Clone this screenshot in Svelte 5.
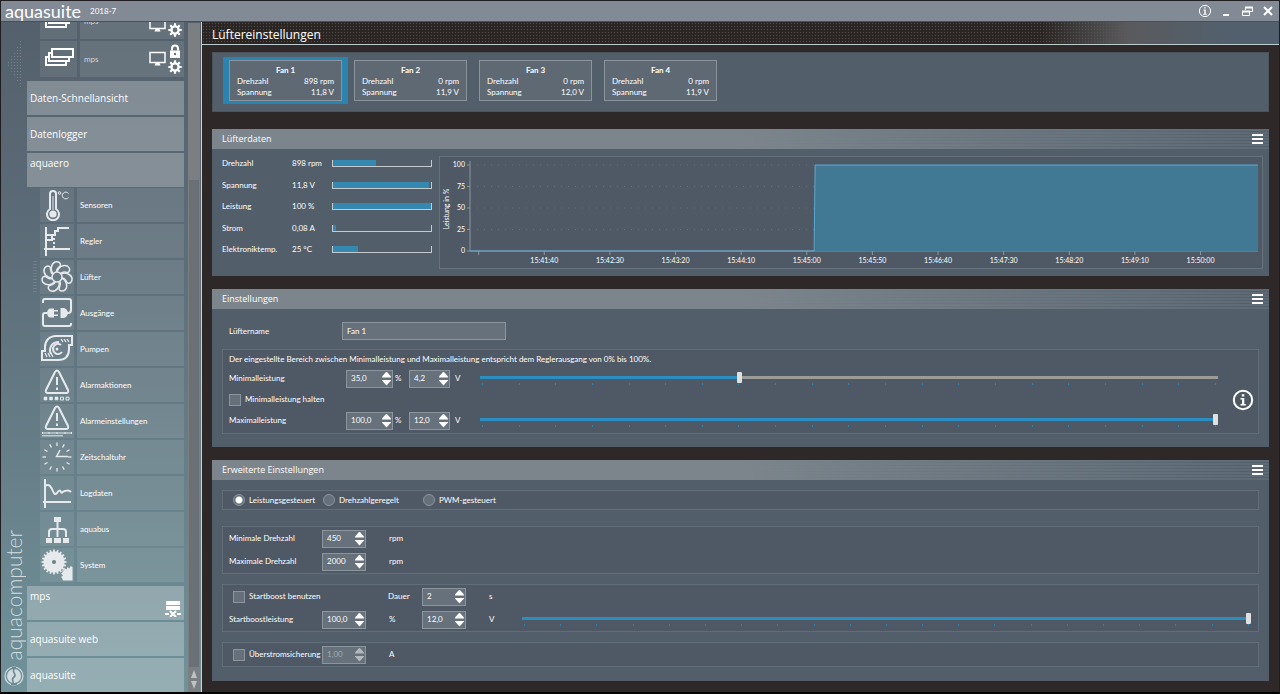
<script>
	let selectedFan = 0;
	let mode = 'power';
	let fanName = 'Fan 1';
	let minPower = 35;
	let maxPower = 100;
	let boostPower = 100;
	let chartWidth = 824;

	const fans = [
		{ name: 'Fan 1', speed: '898 rpm', voltage: '11,8 V' },
		{ name: 'Fan 2', speed: '0 rpm', voltage: '11,9 V' },
		{ name: 'Fan 3', speed: '0 rpm', voltage: '12,0 V' },
		{ name: 'Fan 4', speed: '0 rpm', voltage: '11,9 V' }
	];

	const readings = [
		{ label: 'Drehzahl', value: '898 rpm', level: 44 },
		{ label: 'Spannung', value: '11,8 V', level: 98 },
		{ label: 'Leistung', value: '100 %', level: 100 },
		{ label: 'Strom', value: '0,08 A', level: 3 },
		{ label: 'Elektroniktemp.', value: '25 °C', level: 25 }
	];

	const pages = [
		{ name: 'Sensoren', icon: 'sensor' },
		{ name: 'Regler', icon: 'control' },
		{ name: 'Lüfter', icon: 'fan' },
		{ name: 'Ausgänge', icon: 'output' },
		{ name: 'Pumpen', icon: 'pump' },
		{ name: 'Alarmaktionen', icon: 'alarm' },
		{ name: 'Alarmeinstellungen', icon: 'alarmset' },
		{ name: 'Zeitschaltuhr', icon: 'clock' },
		{ name: 'Logdaten', icon: 'log' },
		{ name: 'aquabus', icon: 'bus' },
		{ name: 'System', icon: 'system' }
	];

	const modes = [
		{ id: 'power', label: 'Leistungsgesteuert' },
		{ id: 'speed', label: 'Drehzahlgeregelt' },
		{ id: 'pwm', label: 'PWM-gesteuert' }
	];

	const times = ['', '15:41:40', '15:42:30', '15:43:20', '15:44:10', '15:45:00', '15:45:50', '15:46:40', '15:47:30', '15:48:20', '15:49:10', '15:50:00'];
	const scale = [100, 75, 50, 25, 0];
	const ticks = Array(21);

	const plotLeft = 30;
	const plotTop = 8;
	const plotBottom = 94;
	$: plotRight = chartWidth - 4;
	$: plotWidth = plotRight - plotLeft;
	$: jump = plotLeft + plotWidth * 0.438;

	const yOf = (value) => plotBottom - ((plotBottom - plotTop) * value) / 100;

	// outline of a gear, used by the settings and system icons
	const gear = (cx, cy, outer, inner, teeth) => {
		const points = [];
		for (let i = 0; i < teeth; i++) {
			[[-0.3, inner], [-0.2, outer], [0.2, outer], [0.3, inner]].forEach(([shift, radius]) => {
				const angle = ((i + shift) / teeth) * Math.PI * 2;
				points.push(`${(cx + Math.cos(angle) * radius).toFixed(2)},${(cy + Math.sin(angle) * radius).toFixed(2)}`);
			});
		}
		return points.join(' ');
	};
</script>

{#snippet spinner(id, value, label, disabled = false)}
	<span class="spinner" class:disabled>
		<input {id} type="text" {value} aria-label={label} {disabled} />
		<span class="arrows">
			<button class="up" aria-label="+" {disabled}></button>
			<button class="down" aria-label="-" {disabled}></button>
		</span>
	</span>
{/snippet}

{#snippet tickmarks()}
	<span class="ticks">
		{#each ticks as _}<i></i>{/each}
	</span>
{/snippet}

{#snippet stack()}
	<svg class="stack" viewBox="0 0 32 24">
		<path d="M9 2h21v8H9zM9 6H6v8h20v-3M6 10H3v8h20v-3" />
	</svg>
{/snippet}

{#snippet cog()}
	<svg class="cog" viewBox="0 0 14 14">
		<polygon points={gear(7, 7, 6.8, 4.8, 8)} />
		<circle cx="7" cy="7" r="2.4" />
	</svg>
{/snippet}

{#snippet monitor()}
	<svg class="monitor" viewBox="0 0 18 16">
		<rect x="1" y="1.5" width="15" height="10" />
		<path d="M6.5 12h4l1 2.5h-6z" />
	</svg>
{/snippet}

<div class="window">
	<header class="titlebar">
		<span class="logo">aquasuite</span>
		<span class="version">2018-7</span>
		<div class="controls">
			<button aria-label="Info">
				<svg viewBox="0 0 14 14"><circle cx="7" cy="7" r="5.6" /><path class="solid" d="M5.500 5.500h2.200v4.200h1v1H5.300v-1h1V6.400h-.8zM6.200 3.200h1.500v1.400H6.200z" /></svg>
			</button>
			<button aria-label="Minimieren">
				<svg viewBox="0 0 14 14"><path stroke-width="2" d="M4 11h6" /></svg>
			</button>
			<button aria-label="Wiederherstellen">
				<svg viewBox="0 0 14 14"><path d="M5.500 6V3.500h7v4H10" /><path stroke-width="2" d="M5 3.500h8M2 7.500h8" /><path d="M2.500 7v4.500h7V7" /></svg>
			</button>
			<button aria-label="Schließen">
				<svg viewBox="0 0 14 14"><path stroke-width="2" d="M3 3l8 8M11 3l-8 8" /></svg>
			</button>
		</div>
	</header>

	<div class="body">
		<aside>
			<div class="rail">
				<button class="collapse" aria-label="Einklappen"></button>
				<div class="brand">
					<span>aquacomputer</span>
					<svg viewBox="0 0 20 20">
						<circle cx="10" cy="10" r="9" fill="none" stroke="#d3dde0" stroke-width="1.2" />
						<circle cx="10" cy="10" r="7" fill="#d3dde0" />
						<path d="M11 2c-5 4 3 6-1 9s1 5-1 8" fill="none" stroke="#6c8a91" stroke-width="1.6" />
						<path d="M8 1h4v2H8zM7 17h6v2H7z" fill="#6c8a91" />
					</svg>
				</div>
			</div>

			<nav>
				<a class="device" href="#mps1">
					<span class="icon">{@render stack()}</span>
					<span class="name">mps <span class="badges">{@render monitor()}{@render cog()}</span></span>
				</a>
				<a class="device" href="#mps2">
					<span class="icon">{@render stack()}</span>
					<span class="name">mps
						<span class="badges">
							{@render monitor()}
							<span class="pair">
								<svg class="lock" viewBox="0 0 12 14"><path d="M3 6V4a3 3 0 0 1 6 0v2" /><rect x="1" y="6" width="10" height="7.500" /><circle cx="6" cy="9.500" r="1.200" /></svg>
								{@render cog()}
							</span>
						</span>
					</span>
				</a>
				<a class="tile" href="#overview">Daten-Schnellansicht</a>
				<a class="tile" href="#logger">Datenlogger</a>
				<a class="tile top" href="#aquaero">aquaero</a>
				<div class="submenu">
					{#each pages as page}
						<a class="page" class:active={page.icon == 'fan'} href="#{page.icon}">
							<span class="icon">
								<svg viewBox="0 0 32 32">
									{#if page.icon == 'sensor'}
										<path d="M9 20V5a3 3 0 0 1 6 0v15a6 6 0 1 1-6 0z" />
										<path stroke-width="1" d="M12 7v14" />
										<circle class="fill" cx="12" cy="25" r="2.600" />
										<circle stroke-width="1" cx="18.500" cy="4" r="1.300" />
										<path stroke-width="1" d="M27.500 4.500a3.400 3.400 0 1 0 0 4" />
									{:else if page.icon == 'control'}
										<path d="M5 2v29M3 24h26M5 10h6v5H5M11 10h3V6h3V3h11" />
										<path stroke-dasharray="2 2" d="M13 13v11" />
									{:else if page.icon == 'fan'}
										<g stroke-width="1.500">
											<circle cx="16" cy="16" r="5" />
											{#each [0, 51, 103, 154, 206, 257, 309] as angle}
												<path transform="rotate({angle} 16 16)" d="M12 12.500C9 9 10 3 14 1c3-.8 5.500.5 5.500 3-.3 2-4.500 3-4 7" />
											{/each}
										</g>
									{:else if page.icon == 'output'}
										<path d="M2 6V4Q2 2 4 2h24q2 0 2 2v9q0 3-3 3h-1M6 16H4q-2 0-2 2v9q0 2 2 2h24q2 0 2-2v-1" />
										<path class="fill" stroke="none" d="M13 11.500v1.500h4v1.500h-4v3h4V19h-4v1.500H9.500q-3 0-3.500-4.500.5-4.500 3.500-4.500zM19.500 11h3.500q3.500 1 4 5-.5 4-4 5h-3.500z" />
									{:else if page.icon == 'pump'}
										<path d="M31 3H15C8 3 4 8 4 14v4H1v9h16c8 0 11-5 11-11v-4h3zM10 21C7 15 11 9 18 9" />
										<path d="M20 12a5 5 0 1 0 1 7" />
										<circle class="fill" cx="16" cy="16" r="1.500" stroke="none" />
										<path stroke-width="1.300" d="M20 6l2 3M23 6l2 3M26 6l2 3M4 20l2 4M7 20l2 4M10 20l2 4" />
									{:else if page.icon == 'alarm' || page.icon == 'alarmset'}
										<path d="M14 3q2-3 4 0l9 18q1 3-2 3H7q-3 0-2-3z" />
										<path d="M16 8v8M16 18.500v2.500" />
										{#if page.icon == 'alarm'}
											<path class="fill" d="M3 28h3v3H3zM8.500 28h3v3h-3zM14 28h3v3h-3z" stroke-width=".5" />
											<path stroke-width="1" d="M19.500 28.200h3v2.800h-3zM25 28.200h3v2.800h-3z" />
										{:else}
											<path stroke-width="1" d="M1 28h30M1.500 27v2M8 27v2M16 27v2M24 27v2M30.500 27v2M1 30.800h21" />
										{/if}
									{:else if page.icon == 'clock'}
										{#each Array(12) as _, hour}
											<path stroke-width="1.300" transform="rotate({hour * 30} 16 16)" d="M16 1.500v3.500" />
										{/each}
										<path stroke-width="1.500" d="M19 9l-3.500 6.500H27" />
									{:else if page.icon == 'log'}
										<path d="M4 2v29M2 25h28M4 9c3-2 5-1 7 3 2 5 3 6 5 4 2-3 3-3 4-1s2-1 4-1 3-2 6 1" />
									{:else if page.icon == 'bus'}
										<path class="fill" stroke="none" d="M13 4h7v5h-7zM5 25h6v5H5zM13 25h7v5h-7zM22 25h6v5h-6z" />
										<path d="M16.500 9v15M8 24v-5q0-3 3-3h11q3 0 3 3v5" />
									{:else}
										<polygon class="fill" points={gear(13, 13, 12.5, 10.5, 20)} stroke="none" />
										<circle class="hole" cx="13" cy="13" r="2" />
										<path class="fill" stroke="none" d="M31.500 31.500H22l-1-2.500-1-1 2-1.500-2-2 2-1.500-1-2 2 .5.5-2.500 2 1.500 1-2.500 2 1.500 1-2.500 2 1z" />
									{/if}
								</svg>
							</span>
							<span class="name">{page.name}</span>
						</a>
					{/each}
				</div>
				<a class="tile top" href="#mps">mps
					<svg class="server" viewBox="0 0 16 16"><path d="M1 0h14v4H1zM1 5h14v4H1zM0 12h4v2H0zM12 12h4v2h-4z" /><path class="cross" d="M5 10l6 6M11 10l-6 6" /></svg>
				</a>
				<a class="tile" href="#web">aquasuite web</a>
				<a class="tile" href="#aquasuite">aquasuite</a>
			</nav>

			<div class="scrollbar">
				<div class="thumb"></div>
				<button class="up" aria-label="Nach oben"></button>
				<button class="down" aria-label="Nach unten"></button>
			</div>
		</aside>

		<main>
			<h1>Lüftereinstellungen</h1>

			<div class="content">
				<section class="fans">
					{#each fans as fan, index}
						<button class:selected={selectedFan == index} on:click={() => (selectedFan = index)}>
							<span class="card">
								<b>{fan.name}</b>
								<span>Drehzahl <em>{fan.speed}</em></span>
								<span>Spannung <em>{fan.voltage}</em></span>
							</span>
						</button>
					{/each}
				</section>

				<section class="panel">
					<header><h2>Lüfterdaten</h2><button class="menu" aria-label="Menü"></button></header>
					<div class="data">
						<dl>
							{#each readings as reading}
								<div>
									<dt>{reading.label}</dt>
									<dd>{reading.value}</dd>
									<dd class="meter"><span style="width: {reading.level}%"></span></dd>
								</div>
							{/each}
						</dl>
						<div class="chart" bind:clientWidth={chartWidth}>
							<svg width={chartWidth} height="111">
								{#each scale as value}
									{#if value > 0}
										<line class="grid" x1={plotLeft + 7} x2={jump} y1={yOf(value)} y2={yOf(value)} />
									{/if}
									<line class="axis" x1={plotLeft - 3} x2={plotLeft} y1={yOf(value)} y2={yOf(value)} />
									<text class="value" x={plotLeft - 5} y={yOf(value) + 2}>{value}</text>
								{/each}
								<text class="title" transform="translate(9 52) rotate(-90)">Leistung in %</text>
								<path class="axis" d="M{plotLeft} 4V{plotBottom}H{plotRight}" />
								{#each times as time, index}
									{@const x = plotLeft + plotWidth * (0.011 + index * 0.08328)}
									<line class="axis" x1={x} x2={x} y1={plotBottom} y2={plotBottom + 4} />
									<text class="time" {x} y={plotBottom + 12}>{time}</text>
								{/each}
								<rect class="area" x={jump} y={plotTop} width={plotRight - jump} height={plotBottom - plotTop} />
								<path class="curve" d="M{plotLeft} {plotBottom}H{jump - 1}L{jump} {plotTop}H{plotRight}" />
							</svg>
						</div>
					</div>
				</section>

				<section class="panel">
					<header><h2>Einstellungen</h2><button class="menu" aria-label="Menü"></button></header>
					<div class="settings">
						<div class="fanname">
							<label for="fanname">Lüftername</label>
							<input id="fanname" type="text" bind:value={fanName} />
						</div>
						<div class="group range">
							<div class="rows">
								<p>Der eingestellte Bereich zwischen Minimalleistung und Maximalleistung entspricht dem Reglerausgang von 0% bis 100%.</p>
								<div class="power">
									<label for="minpower">Minimalleistung</label>
									{@render spinner('minpower', '35,0', 'Minimalleistung %')}
									<span>%</span>
									{@render spinner('minvolt', '4,2', 'Minimalleistung V')}
									<span>V</span>
									<div class="slider">
										<input type="range" aria-label="Minimalleistung" bind:value={minPower} style="--level: {minPower}%" />
										{@render tickmarks()}
									</div>
								</div>
								<label class="check"><input type="checkbox" />Minimalleistung halten</label>
								<div class="power">
									<label for="maxpower">Maximalleistung</label>
									{@render spinner('maxpower', '100,0', 'Maximalleistung %')}
									<span>%</span>
									{@render spinner('maxvolt', '12,0', 'Maximalleistung V')}
									<span>V</span>
									<div class="slider">
										<input type="range" aria-label="Maximalleistung" bind:value={maxPower} style="--level: {maxPower}%" />
										{@render tickmarks()}
									</div>
								</div>
							</div>
							<button class="info" aria-label="Info">
								<svg viewBox="0 0 22 22"><circle cx="11" cy="11" r="9.200" /><path class="solid" d="M8.500 9h3.800v6h1.500v1.500H8.500V15H10v-4.500H8.500zM9.800 5.200h2.500v2.300H9.800z" /></svg>
							</button>
						</div>
					</div>
				</section>

				<section class="panel">
					<header><h2>Erweiterte Einstellungen</h2><button class="menu" aria-label="Menü"></button></header>
					<div class="advanced">
						<div class="group modes">
							{#each modes as item}
								<label class="check"><input type="radio" name="mode" value={item.id} bind:group={mode} />{item.label}</label>
							{/each}
						</div>
						<div class="group">
							<div class="line">
								<label for="minspeed">Minimale Drehzahl</label>
								{@render spinner('minspeed', '450', 'Minimale Drehzahl')}
								<span class="unit">rpm</span>
							</div>
							<div class="line">
								<label for="maxspeed">Maximale Drehzahl</label>
								{@render spinner('maxspeed', '2000', 'Maximale Drehzahl')}
								<span class="unit">rpm</span>
							</div>
						</div>
						<div class="group">
							<div class="line">
								<label class="check wide"><input type="checkbox" />Startboost benutzen</label>
								<label for="duration">Dauer</label>
								{@render spinner('duration', '2', 'Dauer')}
								<span class="unit">s</span>
							</div>
							<div class="line">
								<label for="boost">Startboostleistung</label>
								{@render spinner('boost', '100,0', 'Startboostleistung %')}
								<span class="unit">%</span>
								{@render spinner('boostvolt', '12,0', 'Startboostleistung V')}
								<span class="unit">V</span>
								<div class="slider">
									<input type="range" aria-label="Startboostleistung" bind:value={boostPower} style="--level: {boostPower}%" />
									{@render tickmarks()}
								</div>
							</div>
						</div>
						<div class="group">
							<div class="line">
								<label class="check"><input type="checkbox" />Überstromsicherung</label>
								{@render spinner('current', '1,00', 'Überstromsicherung', true)}
								<span class="unit">A</span>
							</div>
						</div>
					</div>
				</section>
			</div>
		</main>
	</div>
</div>

<style>
	:global(body) {
		margin: 0;
		background-color: #000;
	}

	.window,
	.window * {
		box-sizing: border-box;
	}

	.window {
		display: flex;
		flex-direction: column;
		height: 100vh;
		overflow: hidden;
		border: 1px solid #201d20;
		border-bottom: 2px solid #000;
		font-family: Lato, "Open Sans", sans-serif;
		font-size: 8px;
		line-height: 11px;
		color: #fff;
		background-color: #2f2828;
	}

	button {
		padding: 0;
		border: 0;
		background: none;
		color: inherit;
		font: inherit;
	}

	input {
		margin: 0;
		font: inherit;
		color: inherit;
	}

	a {
		color: inherit;
		text-decoration: none;
	}

	svg {
		display: block;
		fill: none;
		stroke: #fff;
	}

	.solid {
		fill: #fff;
		stroke: none;
	}

	/* title bar */
	.titlebar {
		display: flex;
		align-items: center;
		flex: none;
		height: 20px;
		padding: 0 4px;
		background-color: #828b95;
	}

	.logo {
		font-size: 18px;
		line-height: 20px;
	}

	.version {
		margin-left: 9px;
	}

	.controls {
		display: flex;
		gap: 7px;
		margin-left: auto;
	}

	.controls svg {
		width: 14px;
		height: 14px;
	}

	.body {
		display: flex;
		flex: 1;
		min-height: 0;
		border-top: 1px solid #4a5058;
	}

	/* sidebar */
	aside {
		display: flex;
		flex: none;
		width: 201px;
		overflow: hidden;
		border-right: 1px solid #c5d5d8;
		background: linear-gradient(#54616c, #5b6b77 30%, #68818a 70%, #70929a);
	}

	.rail {
		display: flex;
		flex-direction: column;
		justify-content: space-between;
		align-items: center;
		flex: none;
		width: 26px;
		padding: 18px 0 6px;
	}

	.collapse {
		width: 14px;
		height: 48px;
		clip-path: polygon(0 50%, 100% 0, 100% 100%);
		background: radial-gradient(#74838d 30%, transparent 40%) 0 0 / 3px 3px;
	}

	.brand {
		display: flex;
		flex-direction: column;
		align-items: center;
		gap: 6px;
	}

	.brand span {
		font-size: 21px;
		font-weight: 300;
		line-height: 24px;
		color: #d3dde0;
		writing-mode: vertical-rl;
		transform: rotate(180deg);
	}

	.brand svg {
		width: 20px;
		height: 20px;
		stroke: none;
	}

	nav {
		display: flex;
		flex-direction: column;
		gap: 2px;
		flex: 1;
		margin-top: -19px;
	}

	.device,
	.page {
		display: flex;
		flex: none;
		gap: 3px;
		height: 36px;
		margin-left: 13px;
	}

	.page {
		height: 34px;
		position: relative;
	}

	.page.active::before {
		content: "";
		position: absolute;
		left: -7px;
		width: 4px;
		height: 34px;
		background: radial-gradient(#84949c 30%, transparent 40%) 0 0 / 2px 3px;
	}

	.device .icon,
	.page .icon {
		display: flex;
		align-items: center;
		justify-content: center;
		width: 37px;
		background-color: rgba(255, 255, 255, 0.08);
	}

	.page .icon {
		width: 34px;
	}

	.device .name,
	.page .name {
		display: flex;
		align-items: center;
		flex: 1;
		padding-left: 4px;
		background-color: rgba(255, 255, 255, 0.1);
	}

	.page .name {
		padding: 1px 0 0 3px;
	}

	.device .name {
		color: #d2d7da;
	}

	.page svg {
		width: 32px;
		height: 32px;
		stroke: #e6eaed;
		stroke-width: 2;
	}

	.page .fill {
		fill: #e6eaed;
	}

	.page .hole {
		fill: #6c8088;
		stroke: none;
	}

	.stack {
		width: 32px;
		height: 24px;
		stroke-width: 2;
	}

	.badges {
		display: flex;
		align-items: center;
		gap: 1px;
		margin-left: auto;
		padding-right: 2px;
	}

	.device:first-child .badges {
		align-items: flex-end;
		padding-top: 12px;
	}

	.device:first-child .monitor {
		margin-bottom: 4px;
	}

	.pair {
		display: flex;
		flex-direction: column;
		align-items: center;
		gap: 1px;
	}

	.monitor {
		width: 18px;
		height: 16px;
		stroke-width: 1.5;
	}

	.monitor path,
	.lock rect {
		fill: #fff;
		stroke: none;
	}

	.lock {
		width: 12px;
		height: 15px;
		stroke-width: 2;
	}

	.lock circle,
	.cog circle {
		fill: #65717c;
		stroke: none;
	}

	.cog {
		width: 14px;
		height: 14px;
		fill: #fff;
		stroke: none;
	}

	.tile {
		display: flex;
		align-items: center;
		flex: none;
		height: 34px;
		padding: 0 3px;
		font-family: "Open Sans", sans-serif;
		font-size: 10px;
		line-height: 20px;
		background-color: rgba(255, 255, 255, 0.26);
	}

	.device + .tile {
		margin-top: 2px;
	}

	.tile.top {
		align-items: flex-start;
	}

	.server {
		align-self: flex-end;
		width: 16px;
		height: 16px;
		margin: 0 0 3px auto;
		fill: #fff;
		stroke: none;
	}

	.server .cross {
		stroke: #fff;
		stroke-width: 2;
	}

	.submenu {
		display: flex;
		flex-direction: column;
		gap: 2px;
		margin: -1px 0 2px;
	}

	.scrollbar {
		display: flex;
		flex-direction: column;
		align-items: center;
		flex: none;
		width: 12px;
		margin: 1px 1px 0 4px;
		padding-bottom: 3px;
		gap: 3px;
		background-color: #7b7f82;
	}

	.scrollbar .thumb {
		flex: 1;
		width: 10px;
		margin-top: 157px;
		background-color: #6b7075;
	}

	.scrollbar .up,
	.scrollbar .down {
		width: 6px;
		height: 8px;
		background-color: #bcc2c5;
		clip-path: polygon(50% 0, 100% 100%, 0 100%);
	}

	.scrollbar .down {
		clip-path: polygon(0 0, 100% 0, 50% 100%);
	}

	/* main area */
	main {
		flex: 1;
		min-width: 0;
		overflow: hidden;
	}

	h1,
	h2 {
		margin: 0;
		font-family: "Open Sans", sans-serif;
		font-weight: normal;
	}

	h1 {
		height: 23px;
		padding-left: 10px;
		border-bottom: 1px solid #bccccf;
		font-size: 12px;
		line-height: 25px;
		background:
			linear-gradient(to right, transparent 78%, #5a5a5d 86%, #52606d 95%),
			radial-gradient(#4f4946 25%, transparent 50%) 0 0 / 3px 3px,
			#292422;
	}

	.content {
		display: flex;
		flex-direction: column;
		gap: 13px;
		padding: 7px 10px;
	}

	.fans {
		display: flex;
		margin-bottom: 4px;
		padding: 4px 10px 7px;
		border: 1px solid #4b535b;
		background-color: #525e6a;
	}

	.fans button {
		width: 125px;
		padding: 3px 6px;
	}

	.fans .selected {
		background-color: #2a84af;
	}

	.card {
		display: flex;
		flex-direction: column;
		height: 41px;
		padding: 4px 7px;
		border: 1px solid #8b949c;
		background-color: #5e6974;
	}

	.card b {
		text-align: center;
	}

	.card span {
		display: flex;
		justify-content: space-between;
	}

	.card em {
		font-style: normal;
	}

	.panel {
		background-color: #525e6a;
	}

	.panel header {
		display: flex;
		align-items: center;
		justify-content: space-between;
		height: 20px;
		padding: 0 6px 0 10px;
		background:
			linear-gradient(to right, #7c858c 50%, transparent),
			repeating-linear-gradient(#5d6a76 0 2px, #525f6b 2px 3px);
	}

	h2 {
		font-size: 9px;
		line-height: 20px;
	}

	.menu {
		width: 11px;
		height: 10px;
		background: repeating-linear-gradient(#fff 0 2px, transparent 2px 4px);
	}

	.data {
		display: flex;
		gap: 7px;
		padding: 7px 6px 7px 10px;
	}

	dl {
		display: flex;
		flex-direction: column;
		flex: none;
		justify-content: space-between;
		margin: 0;
		padding: 2px 0 14px;
	}

	dl div {
		display: grid;
		grid-template-columns: 70px 40px 100px;
		align-items: center;
		height: 11px;
	}

	dd {
		margin: 0;
	}

	.meter {
		display: flex;
		height: 7px;
		border: 1px solid #c4cacd;
		border-top: 0;
	}

	.meter span {
		background-color: #3588af;
	}

	.chart {
		flex: 1;
		min-width: 0;
		height: 113px;
		border: 1px solid #66727e;
		background-color: #4f5965;
	}

	.chart text {
		fill: #fff;
		stroke: none;
		font-size: 7px;
	}

	.chart .value {
		text-anchor: end;
	}

	.chart .time,
	.chart .title {
		text-anchor: middle;
	}

	.chart .axis {
		stroke: #8c969f;
	}

	.chart .grid {
		stroke: #66717c;
		stroke-dasharray: 1 6;
	}

	.chart .area {
		fill: #417995;
		stroke: none;
	}

	.chart .curve {
		stroke: #5badd8;
	}

	.group {
		border: 1px solid #616e7a;
		background-color: #4f5965;
	}

	.settings {
		padding: 13px 10px;
	}

	.fanname {
		display: flex;
		align-items: center;
		height: 18px;
		margin-bottom: 9px;
		padding-left: 7px;
	}

	.fanname label {
		width: 113px;
	}

	.fanname input {
		width: 164px;
		height: 18px;
		padding: 0 4px;
		border: 1px solid #8b959d;
		background-color: #66717b;
	}

	.range {
		display: flex;
		align-items: center;
		padding: 0 4px 0 6px;
	}

	.rows {
		flex: 1;
		padding: 4px 0 2px;
	}

	.rows p {
		height: 14px;
		margin: 0;
	}

	.power {
		display: grid;
		grid-template-columns: 117px 47px 16px 41px 30px 1fr;
		align-items: center;
		height: 21px;
	}

	.power > span {
		padding-left: 2px;
	}

	.power > .spinner {
		width: 100%;
		padding-left: 4px;
	}

	.power > .spinner + span + .spinner + span {
		padding-left: 5px;
	}

	.rows .check {
		height: 21px;
	}

	.check {
		display: flex;
		align-items: center;
		gap: 4px;
	}

	.check input {
		appearance: none;
		flex: none;
		width: 12px;
		height: 12px;
		border: 1px solid #8b959d;
		background-color: #65707b;
	}

	.check input[type="checkbox"]:checked {
		background-color: #2a8ec2;
	}

	.check input[type="radio"] {
		border-radius: 50%;
	}

	.check input[type="radio"]:checked {
		background: radial-gradient(#fff 0 3px, #65707b 4px);
	}

	.spinner {
		display: flex;
		justify-content: space-between;
		width: 44px;
		height: 18px;
		padding: 0 1px 0 4px;
		border: 1px solid #8b959d;
		background-color: #66717b;
	}

	.spinner input {
		flex: 1;
		width: 0;
		padding: 0;
		border: 0;
		background: none;
	}

	.arrows {
		display: flex;
		flex-direction: column;
		justify-content: center;
		gap: 2px;
		width: 9px;
	}

	.arrows button {
		height: 6px;
		background-color: #fff;
		clip-path: polygon(50% 0, 100% 85%, 100% 100%, 0 100%, 0 85%);
	}

	.arrows .down {
		clip-path: polygon(0 0, 100% 0, 100% 15%, 50% 100%, 0 15%);
	}

	.spinner.disabled {
		color: #a3abb1;
	}

	.disabled .arrows {
		opacity: 0.5;
	}

	.slider {
		display: flex;
		flex-direction: column;
	}

	.slider input {
		appearance: none;
		width: 100%;
		height: 11px;
		background: linear-gradient(to right, #2a8ec2 var(--level), #9b9b98 var(--level)) center / 100% 3px no-repeat;
	}

	.slider input::-webkit-slider-thumb {
		appearance: none;
		width: 5px;
		height: 11px;
		border-radius: 1px;
		background-color: #e0e0e0;
	}

	.ticks {
		display: flex;
		justify-content: space-between;
		height: 2px;
		padding: 0 2px;
	}

	.ticks i {
		width: 1px;
		background-color: #2a82ae;
	}

	.info {
		padding: 17px 0 0 14px;
	}

	.info svg {
		width: 22px;
		height: 22px;
		stroke-width: 2;
	}

	/* advanced settings */
	.advanced {
		display: flex;
		flex-direction: column;
		gap: 10px;
		padding: 10px 10px 14px;
	}

	.modes {
		display: grid;
		grid-template-columns: 90px 100px 1fr;
		height: 20px;
		margin-bottom: 6px;
		padding-left: 10px;
	}

	.advanced .group:not(.modes) {
		padding: 0 7px 0 6px;
	}

	.line {
		display: grid;
		grid-template-columns: 93px 66px 34px 66px 34px 1fr;
		align-items: center;
		height: 23px;
	}

	.line .check {
		padding-left: 4px;
	}

	.line .wide {
		grid-column: span 2;
	}

	.unit {
		padding-left: 1px;
	}
</style>
